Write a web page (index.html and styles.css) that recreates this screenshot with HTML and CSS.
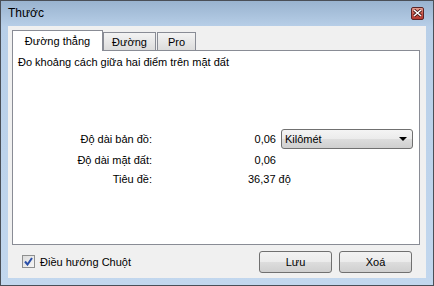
FILE: index.html
```html
<!DOCTYPE html>
<html lang="vi">
<head>
<meta charset="UTF-8">
<title>Thước</title>
<link rel="stylesheet" href="styles.css">
</head>
<body>

<div class="window">

<div class="titlebar">
<span class="title">Thước</span>
<span class="close">
<svg width="9" height="8" viewBox="0 0 9 8"><path d="M1 1 L8 7 M8 1 L1 7" stroke="#3a1010" stroke-width="3"/><path d="M1 1 L8 7 M8 1 L1 7" stroke="#fff" stroke-width="1.6"/></svg>
</span>
</div>

<div class="client">

<div class="tabs">
<div class="tab active">Đường thẳng</div>
<div class="tab">Đường</div>
<div class="tab">Pro</div>
</div>

<div class="panel">
<div class="desc">Đo khoảng cách giữa hai điểm trên mặt đất</div>

<div class="form">
<div class="lbl">Độ dài bản đồ:</div>
<div class="val">0,06</div>
<div class="select">Kilômét<span class="arrow"></span></div>

<div class="lbl">Độ dài mặt đất:</div>
<div class="val">0,06</div>
<div></div>

<div class="lbl">Tiêu đề:</div>
<div class="val deg">36,37 độ</div>
<div></div>
</div>
</div>

<div class="footer">
<label class="check"><span class="box"><svg width="9" height="9" viewBox="0 0 9 9"><path d="M1 4.5 L3.5 7.5 L8 1" fill="none" stroke="#2a4fa8" stroke-width="2"/></svg></span>Điều hướng Chuột</label>
<div class="buttons">
<button>Lưu</button>
<button>Xoá</button>
</div>
</div>

</div>

</div>

</body>
</html>
```

FILE: styles.css
```css
body{
margin:0;
background:#fff;
font-family:"Liberation Sans",Arial,sans-serif;
font-size:11px;
color:#000;
}

.window{
width:434px;
height:286px;
box-sizing:border-box;
border:1px solid #4a4f57;
background:linear-gradient(#99b3cf 0,#b8cfe8 26px,#c2d7ee 100%);
padding:0 7px 7px 7px;
display:flex;
flex-direction:column;
}

.titlebar{
height:25px;
display:flex;
align-items:center;
justify-content:space-between;
}

.title{
font-size:12px;
margin-top:-1px;
}

.close{
width:11px;
height:11px;
border:1px solid #5c2424;
border-radius:2px;
background:linear-gradient(#e6a092,#c8574a 50%,#b5392f);
display:flex;
align-items:center;
justify-content:center;
margin-right:2px;
margin-top:-1px;
}

.client{
flex:1;
background:#f0f0f0;
padding:4px 6px 0 4px;
display:flex;
flex-direction:column;
}

.tabs{
display:flex;
height:20px;
align-items:flex-end;
position:relative;
z-index:1;
}

.tab{
height:18px;
box-sizing:border-box;
border:1px solid #898c95;
border-bottom:none;
background:linear-gradient(#f3f3f3,#dcdcdc);
padding:3px 0 0 0;
text-align:center;
margin-right:2px;
}

.tab:nth-child(2){width:53px;margin-left:0}
.tab:nth-child(3){width:39px;margin-left:-1px}

.tab.active{
width:91px;
height:21px;
margin-bottom:-1px;
background:#fff;
padding-top:4px;
margin-right:0;
}

.panel{
height:195px;
box-sizing:border-box;
border:1px solid #898c95;
background:#fff;
padding:4px 0 0 5px;
}

.desc{
line-height:14px;
}

.form{
display:grid;
grid-template-columns:134px 119px 132px;
grid-template-rows:20px 17px 17px;
column-gap:5px;
row-gap:2px;
margin-top:60px;
align-items:center;
}

.lbl{
text-align:right;
}

.val{
text-align:right;
white-space:nowrap;
}

.deg{
text-align:left;
padding-left:91px;
}

.select{
height:20px;
box-sizing:border-box;
border:1px solid #707070;
border-radius:3px;
background:linear-gradient(#f4f4f4 0,#ebebeb 50%,#dddddd 51%,#cfcfcf 100%);
padding:0 0 0 3px;
display:flex;
align-items:center;
justify-content:space-between;
}

.arrow{
width:0;
height:0;
border-left:4px solid transparent;
border-right:4px solid transparent;
border-top:4px solid #000;
margin-right:5px;
}

.footer{
flex:1;
display:flex;
justify-content:space-between;
align-items:center;
padding:0 8px 0 10px;
}

.check{
display:flex;
align-items:center;
}

.box{
width:11px;
height:11px;
border:1px solid #8e8f8f;
background:linear-gradient(135deg,#dcdcdc,#f6f6f6);
display:flex;
align-items:center;
justify-content:center;
margin-right:5px;
}

.buttons{
display:flex;
gap:7px;
}

button{
width:73px;
height:22px;
border:1px solid #707070;
border-radius:3px;
background:linear-gradient(#f2f2f2 0,#ebebeb 50%,#dddddd 51%,#cfcfcf 100%);
font-family:"Liberation Sans",Arial,sans-serif;
font-size:11px;
padding:0;
}
```
